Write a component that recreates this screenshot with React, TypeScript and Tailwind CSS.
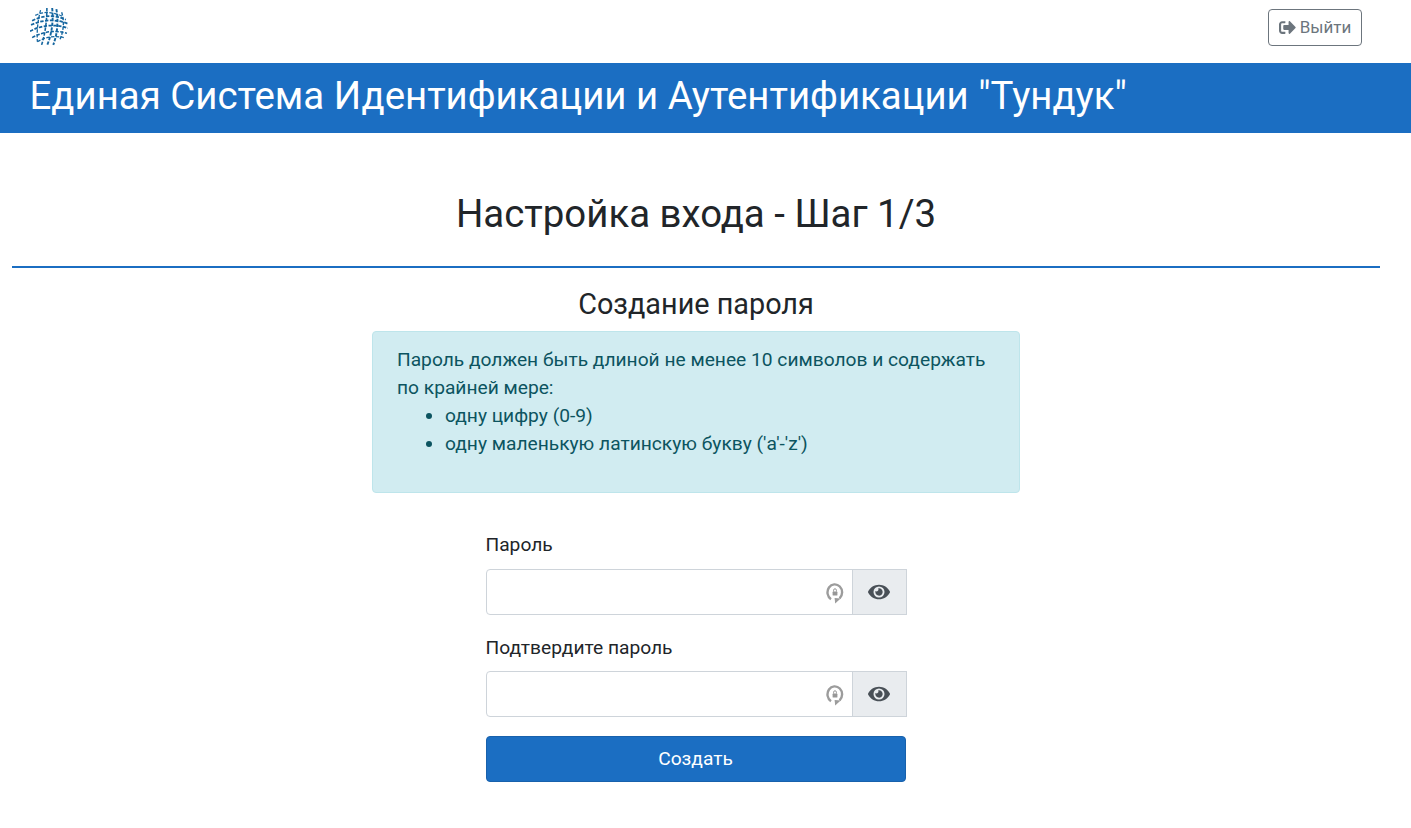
import { type ReactElement } from "react";
import { FaEye, FaSignOutAlt } from "react-icons/fa";

const GLOBE_LINES: readonly { d: string; width: number }[] = [
  { d: "M6 8 Q17 2 32 9", width: 1.2 },
  { d: "M2 17 Q20 9 37 16", width: 1.7 },
  { d: "M3 13 Q19 5 35 12", width: 1.6 },
  { d: "M1 23 Q18 14 37 20", width: 1.7 },
  { d: "M3 29 Q20 20 36 25", width: 1.4 },
  { d: "M8 33 Q20 26 33 29", width: 1.2 },
  { d: "M11 3 Q7 18 8 33", width: 1.2 },
  { d: "M17 1 Q17 20 12 36", width: 1.5 },
  { d: "M22 1 Q24 20 17 37", width: 1.8 },
  { d: "M26 2 Q29 20 23 36", width: 1.8 },
  { d: "M31 5 Q35 18 29 32", width: 1.3 },
];

function GlobeLogo(): ReactElement {
  return (
    <svg width="38" height="38" viewBox="1 1 36 36" fill="none" aria-hidden>
      {GLOBE_LINES.map((line) => (
        <path
          key={line.d}
          d={line.d}
          stroke="#14659f"
          strokeWidth={line.width}
          strokeDasharray="3.2 1.4"
        />
      ))}
    </svg>
  );
}

function KeyBadge(): ReactElement {
  return (
    <svg
      width="18"
      height="22"
      viewBox="0 0 18 22"
      fill="none"
      className="absolute right-[9px] top-[13px]"
      aria-hidden
    >
      <path d="M5 17.2 A7.3 8 0 1 1 13.6 16.4" stroke="#9c9c9c" strokeWidth="2.4" />
      <path d="M8.6 16 L14.6 16.6 L9.2 21.4 Z" fill="#9c9c9c" />
      <rect x="6.6" y="9.6" width="4.8" height="4" rx="0.6" fill="#979797" />
      <path d="M7.6 9.6 V8.2 A1.4 1.4 0 0 1 10.4 8.2 V9.6" stroke="#979797" strokeWidth="1" />
    </svg>
  );
}

function PasswordField({ label }: { label: string }): ReactElement {
  return (
    <div className="mb-[20.6px]">
      <label className="mb-[11.8px] block h-[24px] leading-[24px] text-[#212529]">{label}</label>
      <div className="flex h-[46px] w-[421px]">
        <div className="relative flex-1">
          <input
            type="password"
            className="h-full w-full rounded-l-[4px] border border-[#ced4da] bg-white px-3 outline-none"
          />
          <KeyBadge />
        </div>
        <div className="relative -ml-px flex w-[55px] items-center justify-center border border-[#ced4da] bg-[#e9ecef] text-[#495057]">
          <FaEye size={22} />
        </div>
      </div>
    </div>
  );
}

export default function App(): ReactElement {
  return (
    <div className="min-h-[828px] bg-white font-['Roboto',sans-serif] text-[19.2px] text-[#212529]">
      <header className="flex h-[63px] items-start justify-between pl-[30px] pr-[49px]">
        <div className="pt-[8px]">
          <GlobeLogo />
        </div>
        <button className="mt-[9px] flex h-[37px] w-[94px] items-center justify-center gap-[4px] rounded-[4px] border border-[#6c757d] text-[17px] text-[#6c757d]">
          <FaSignOutAlt size={17} />
          Выйти
        </button>
      </header>

      <div className="flex h-[70px] items-center bg-[#1b6ec2] pb-[4px] pl-[29.5px] text-[38.4px] text-white">
        Единая Система Идентификации и Аутентификации "Тундук"
      </div>

      <main className="flex w-[1392px] flex-col items-center">
        <h1 className="mt-[54px] h-[54px] text-center text-[38.4px] leading-[54px] text-[#212529]">
          Настройка входа - Шаг 1/3
        </h1>
        <div className="mt-[25px] h-[2px] w-[1368px] bg-[#1b6ec2]" />
        <h2 className="mt-[18px] h-[36px] text-[28.8px] leading-[36px]">Создание пароля</h2>

        <div className="mt-[9px] h-[162px] w-[648px] rounded-[4px] border border-[#bee5eb] bg-[#d1ecf1] px-[24px] py-[14px] leading-[28px] text-[#0c5460]">
          <p>
            Пароль должен быть длиной не менее 10 символов и содержать
            <br />
            по крайней мере:
          </p>
          <ul className="list-disc pl-[48px]">
            <li>одну цифру (0-9)</li>
            <li>одну маленькую латинскую букву ('a'-'z')</li>
          </ul>
        </div>

        <form className="mt-[40.2px] w-[421px]">
          <PasswordField label="Пароль" />
          <PasswordField label="Подтвердите пароль" />
          <button
            type="button"
            className="-mt-[2px] h-[46px] w-[420px] rounded-[4px] border border-[#1861ac] bg-[#1b6ec2] text-center text-white"
          >
            Создать
          </button>
        </form>
      </main>
    </div>
  );
}
